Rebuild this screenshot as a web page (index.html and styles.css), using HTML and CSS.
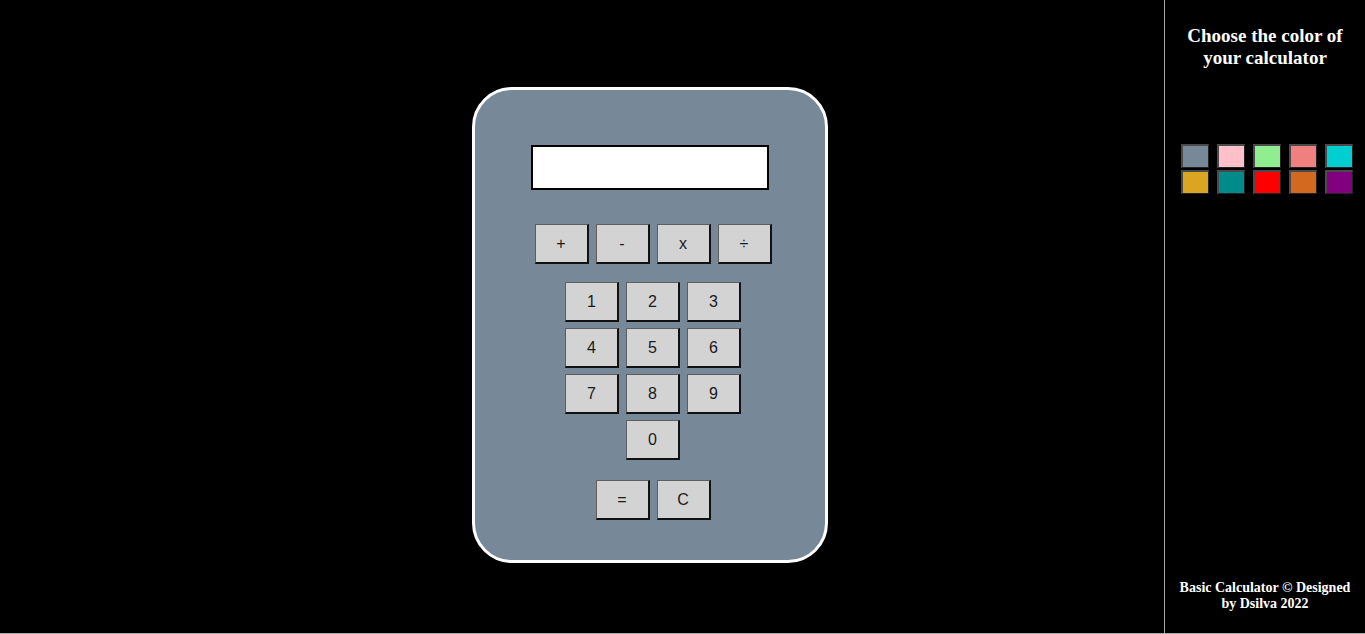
FILE: index.html
```html
<!DOCTYPE html>
<html>
<head>
<meta charset="utf-8">
<title>Basic Calculator</title>
<link rel="stylesheet" href="styles.css">
</head>
<body>
<div class="page">
  <main class="main">
    <div class="calc">
      <div class="display"></div>
      <div class="row ops">
        <button class="key">+</button>
        <button class="key">-</button>
        <button class="key">x</button>
        <button class="key">÷</button>
      </div>
      <div class="digits">
        <div class="row">
          <button class="key">1</button>
          <button class="key">2</button>
          <button class="key">3</button>
        </div>
        <div class="row">
          <button class="key">4</button>
          <button class="key">5</button>
          <button class="key">6</button>
        </div>
        <div class="row">
          <button class="key">7</button>
          <button class="key">8</button>
          <button class="key">9</button>
        </div>
        <div class="row">
          <button class="key">0</button>
        </div>
      </div>
      <div class="row actions">
        <button class="key">=</button>
        <button class="key">C</button>
      </div>
    </div>
  </main>
  <aside class="side">
    <h2 class="side-title">Choose the color of your calculator</h2>
    <div class="swatches">
      <button class="swatch c1"></button>
      <button class="swatch c2"></button>
      <button class="swatch c3"></button>
      <button class="swatch c4"></button>
      <button class="swatch c5"></button>
      <button class="swatch c6"></button>
      <button class="swatch c7"></button>
      <button class="swatch c8"></button>
      <button class="swatch c9"></button>
      <button class="swatch c10"></button>
    </div>
    <p class="footer">Basic Calculator © Designed by Dsilva 2022</p>
  </aside>
</div>
</body>
</html>
```
FILE: styles.css
```css
html, body {
  margin: 0;
  padding: 0;
  background: #000;
}
.page {
  box-sizing: border-box;
  height: 634px;
  display: flex;
  border-bottom: 1px solid #a9a9a9;
}
.main {
  flex: 1;
  padding-top: 87px;
  padding-left: 472px;
}
.calc {
  box-sizing: border-box;
  width: 356px;
  height: 476px;
  border: 3px solid #fff;
  border-radius: 40px;
  background: #778899;
  display: flex;
  flex-direction: column;
  align-items: center;
  padding-top: 55px;
}
.display {
  box-sizing: border-box;
  width: 238px;
  height: 45px;
  background: #fff;
  border: 2px solid #000;
}
.row {
  display: flex;
  gap: 7px;
  justify-content: center;
  margin-left: 6px;
}
.ops {
  margin-top: 34px;
}
.digits {
  margin-top: 18px;
  display: flex;
  flex-direction: column;
  gap: 6px;
}
.actions {
  margin-top: 20px;
}
.key {
  box-sizing: border-box;
  width: 54px;
  height: 40px;
  margin: 0;
  padding: 0;
  background: #d3d3d3;
  border-style: solid;
  border-width: 1px 2px 2px 1px;
  border-color: #5e5e5e #111 #111 #5e5e5e;
  font-family: "Liberation Sans", Arial, sans-serif;
  font-size: 16px;
  color: #1a1a1a;
}
.side {
  width: 200px;
  border-left: 1px solid #a9a9a9;
  display: flex;
  flex-direction: column;
  color: #fff;
  font-family: "Liberation Serif", "Times New Roman", serif;
}
.side-title {
  margin: 25px 0 0;
  font-size: 19px;
  line-height: 22px;
  font-weight: bold;
  text-align: center;
  padding: 0 10px;
}
.swatches {
  margin-top: 75px;
  padding-left: 16px;
  display: grid;
  grid-template-columns: repeat(5, 28px);
  column-gap: 8px;
  row-gap: 2px;
}
.swatch {
  box-sizing: border-box;
  width: 28px;
  height: 24px;
  margin: 0;
  padding: 0;
  border-style: solid;
  border-width: 2px 1px 1px 2px;
  border-color: #4a4a4a #222 #222 #4a4a4a;
}
.c1 { background: #778899; }
.c2 { background: #ffc0cb; }
.c3 { background: #90ee90; }
.c4 { background: #f08080; }
.c5 { background: #00ced1; }
.c6 { background: #daa520; }
.c7 { background: #008b8b; }
.c8 { background: #ff0000; }
.c9 { background: #d2691e; }
.c10 { background: #800080; }
.footer {
  margin: auto 0 0;
  padding: 0 12px 21px;
  font-size: 14px;
  line-height: 16px;
  font-weight: bold;
  text-align: center;
}
```
